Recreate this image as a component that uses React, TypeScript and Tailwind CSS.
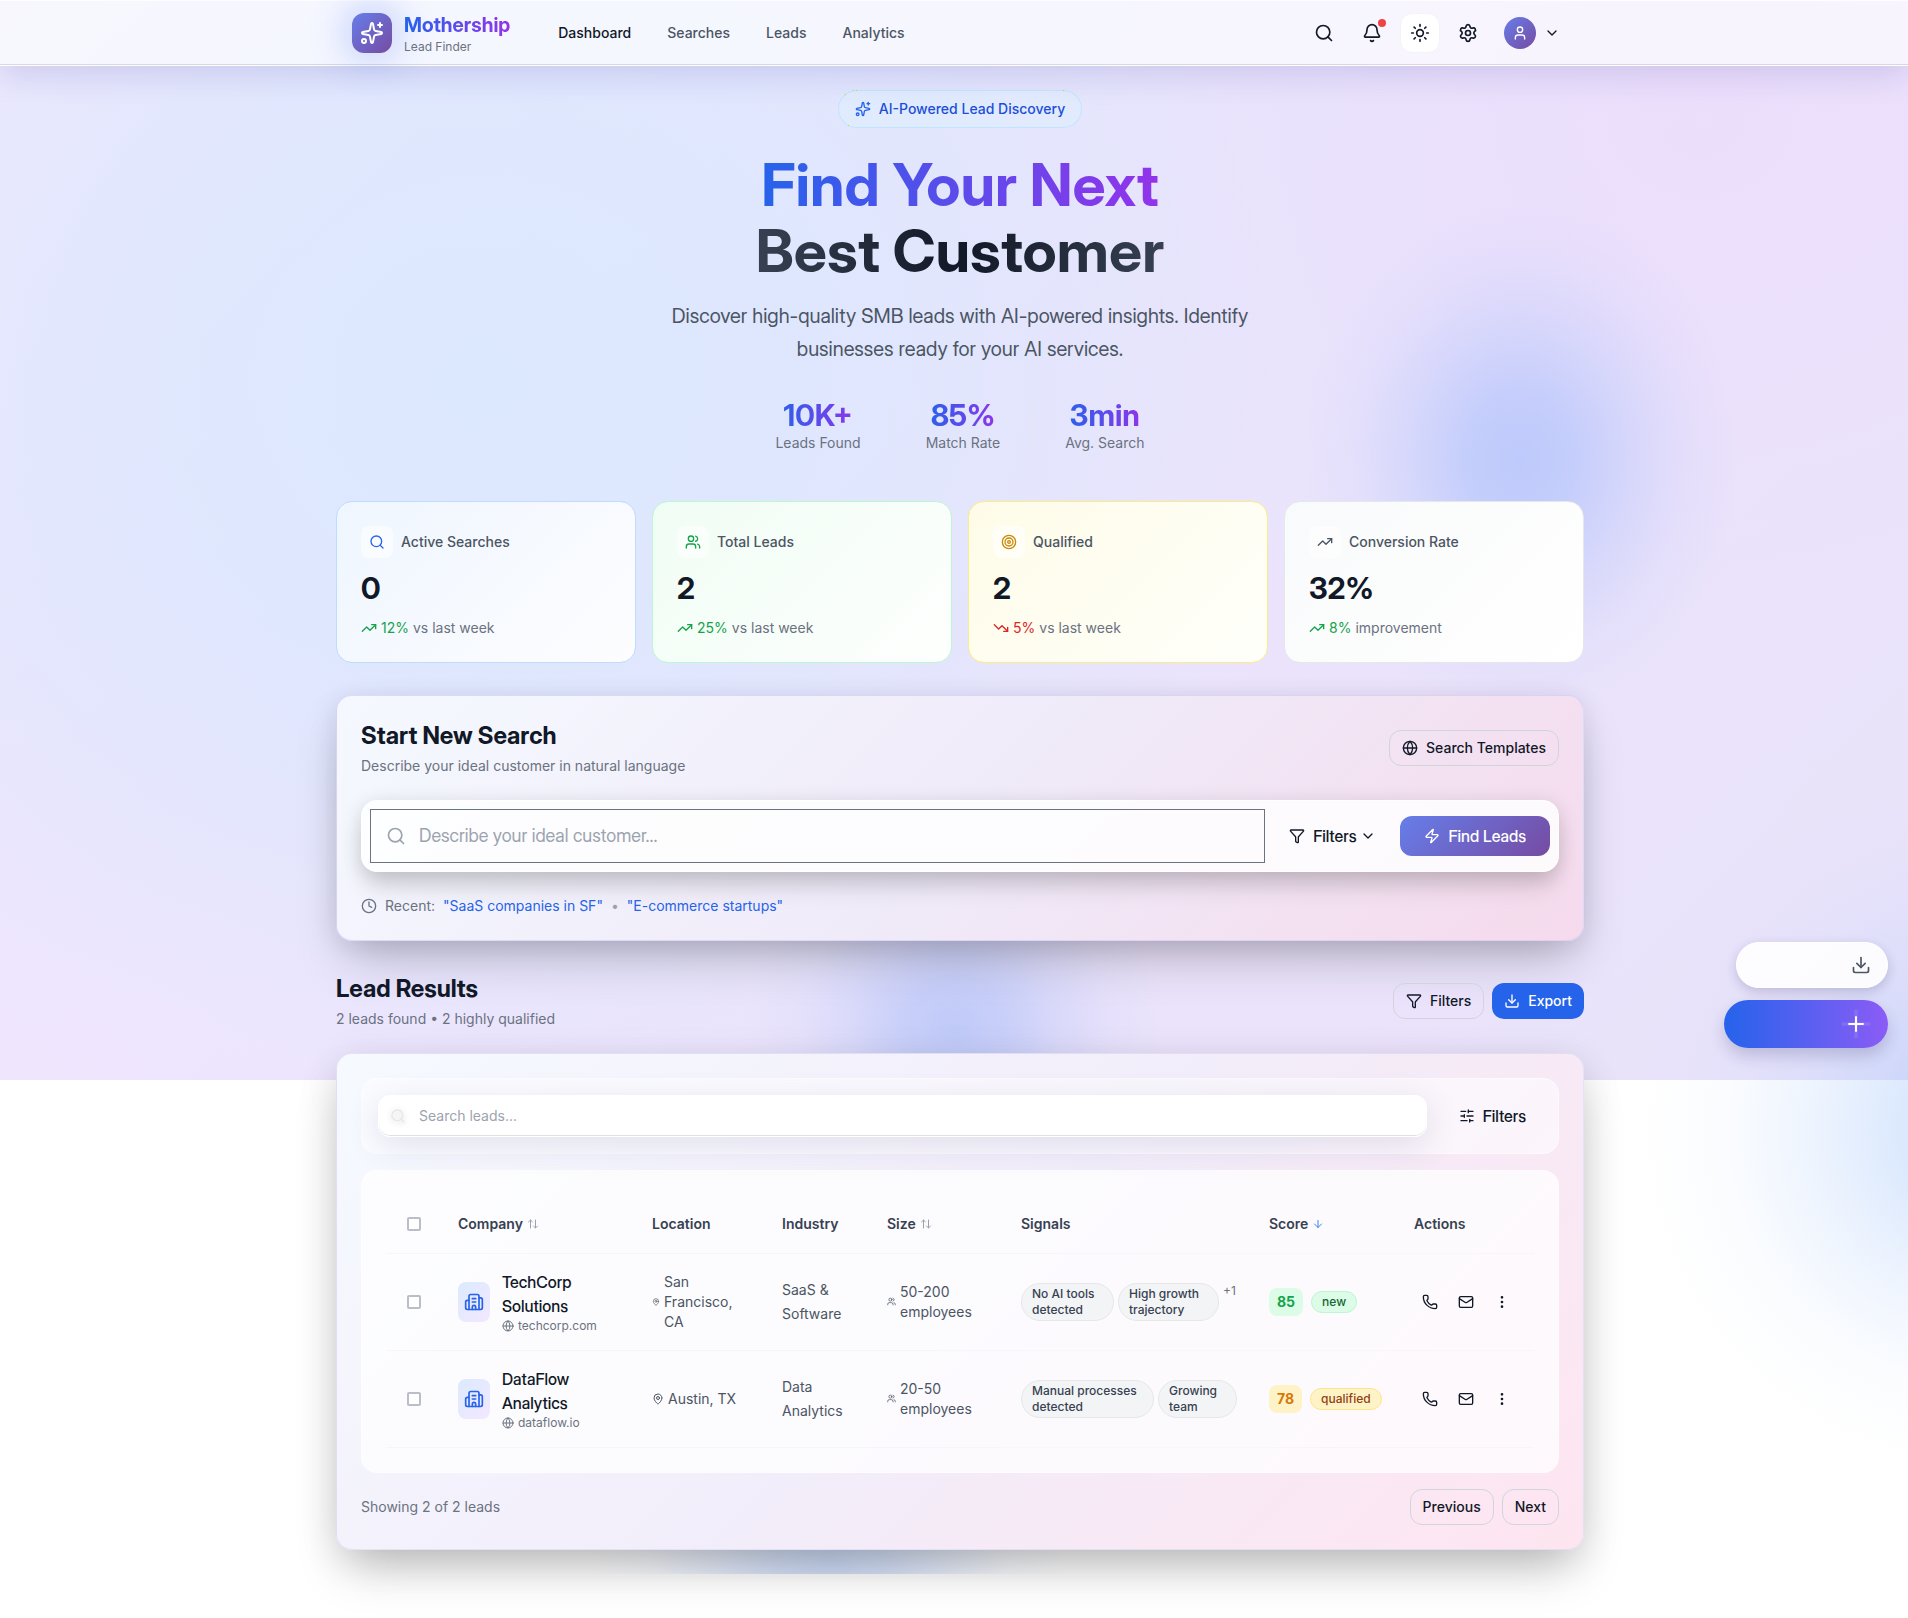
import type { ReactNode } from "react";
import {
  ArrowDown,
  ArrowUpDown,
  Bell,
  Building2,
  ChevronDown,
  Clock,
  Download,
  EllipsisVertical,
  Funnel,
  Globe,
  Mail,
  MapPin,
  Phone,
  Plus,
  Search,
  Settings,
  SlidersHorizontal,
  Sparkles,
  Sun,
  Target,
  TrendingDown,
  TrendingUp,
  User,
  Users,
  Zap,
} from "lucide-react";

const brandText = "bg-linear-to-r/srgb from-[#2563eb] to-[#9333ea] bg-clip-text text-transparent";

function IconButton({ label, active, children }: { label: string; active?: boolean; children: ReactNode }) {
  return (
    <button
      type="button"
      aria-label={label}
      className={
        active
          ? "relative flex size-10 items-center justify-center rounded-xl border border-[#f3f4f6] bg-white"
          : "relative flex size-10 items-center justify-center rounded-xl"
      }
    >
      {children}
    </button>
  );
}

function OutlineButton({ children }: { children: ReactNode }) {
  return (
    <button
      type="button"
      className="flex h-9 items-center gap-2 rounded-xl border border-[#d1d5db] px-3 text-sm font-medium text-[#111827]"
    >
      {children}
    </button>
  );
}

function Header() {
  return (
    <header className="relative z-10 border-y border-white/80 bg-white/65 pl-3 shadow-[inset_0_-1px_0_rgba(0,0,0,0.12),0_8px_32px_rgba(88,80,170,0.2)]">
      <div className="mx-auto flex h-16 max-w-7xl items-center justify-between px-8">
        <div className="flex items-center gap-8">
          <div className="flex items-center gap-3">
            <div className="flex size-10 items-center justify-center rounded-xl bg-linear-135/srgb from-[#667eea] to-[#764ba2] text-white shadow-[0_0_40px_rgba(59,102,246,0.45)]">
              <Sparkles size={24} />
            </div>
            <div>
              <div className={`font-['Inter_Display','Inter',sans-serif] text-xl font-bold ${brandText}`}>Mothership</div>
              <div className="text-xs text-[#6b7280]">Lead Finder</div>
            </div>
          </div>
          <nav className="flex items-center gap-1 text-sm font-medium text-[#4b5563]">
            <a href="#dashboard" className="px-4 py-2 text-[#111827]">
              Dashboard
            </a>
            <a href="#searches" className="px-4 py-2">
              Searches
            </a>
            <a href="#leads" className="px-4 py-2">
              Leads
            </a>
            <a href="#analytics" className="px-4 py-2">
              Analytics
            </a>
          </nav>
        </div>
        <div className="flex items-center gap-2 text-[#111827]">
          <IconButton label="Search">
            <Search size={20} />
          </IconButton>
          <IconButton label="Notifications">
            <Bell size={20} />
            <span className="absolute top-1.5 right-1.5 size-2 rounded-full bg-[#ef4444]" />
          </IconButton>
          <IconButton label="Theme" active>
            <Sun size={20} />
          </IconButton>
          <IconButton label="Settings">
            <Settings size={20} />
          </IconButton>
          <button type="button" aria-label="Account" className="flex items-center gap-2 p-2">
            <span className="flex size-8 items-center justify-center rounded-full bg-linear-135/srgb from-[#667eea] to-[#764ba2] text-white">
              <User size={16} />
            </span>
            <ChevronDown size={16} />
          </button>
        </div>
      </div>
    </header>
  );
}

function Hero() {
  const stats = [
    { value: "10K+", label: "Leads Found" },
    { value: "85%", label: "Match Rate" },
    { value: "3min", label: "Avg. Search" },
  ];
  return (
    <section className="flex flex-col items-center text-center">
      <div className="flex items-center gap-2 rounded-full border border-sky-300/30 bg-sky-100/40 px-4 py-2 text-sm font-medium text-[#1d4ed8]">
        <Sparkles size={16} className="text-[#2563eb]" />
        AI-Powered Lead Discovery
      </div>
      <h1 className="mt-6 font-['Inter_Display','Inter',sans-serif] text-[59px] leading-[66px] font-bold">
        <span className={`block ${brandText}`}>Find Your Next</span>
        <span className="block bg-linear-to-r/srgb from-[#374151] via-[#111827] to-[#374151] bg-clip-text text-transparent">
          Best Customer
        </span>
      </h1>
      <p className="mt-4 max-w-2xl px-8 font-['Inter_Display','Inter',sans-serif] text-xl leading-relaxed text-[#4b5563]">
        Discover high-quality SMB leads with AI-powered insights. Identify businesses ready for your AI services.
      </p>
      <div className="mt-8 flex items-center gap-8">
        {stats.map((s, i) => (
          <div key={s.label} className="flex items-center gap-8">
            {i > 0 && <div className="h-12 w-px bg-gray-200/70" />}
            <div>
              <div className={`font-['Inter_Display','Inter',sans-serif] text-3xl font-bold ${brandText}`}>{s.value}</div>
              <div className="text-sm text-[#6b7280]">{s.label}</div>
            </div>
          </div>
        ))}
      </div>
    </section>
  );
}

type Stat = {
  label: string;
  value: string;
  change: string;
  note: string;
  up: boolean;
  icon: ReactNode;
  tone: string;
};

const statCards: Stat[] = [
  {
    label: "Active Searches",
    value: "0",
    change: "12%",
    note: "vs last week",
    up: true,
    icon: <Search size={16} className="text-[#2563eb]" />,
    tone: "border-[#bfdbfe] from-[#eff6ff] to-[#fdfdff]",
  },
  {
    label: "Total Leads",
    value: "2",
    change: "25%",
    note: "vs last week",
    up: true,
    icon: <Users size={16} className="text-[#16a34a]" />,
    tone: "border-[#bbf7d0] from-[#f0fdf4] to-[#fefffe]",
  },
  {
    label: "Qualified",
    value: "2",
    change: "5%",
    note: "vs last week",
    up: false,
    icon: <Target size={16} className="text-[#ca8a04]" />,
    tone: "border-[#fdec85] from-[#fefce8] to-[#fffffb]",
  },
  {
    label: "Conversion Rate",
    value: "32%",
    change: "8%",
    note: "improvement",
    up: true,
    icon: <TrendingUp size={16} className="text-[#4b5563]" />,
    tone: "border-[#e5e7eb] from-[#f9fafb] to-[#ffffff]",
  },
];

function StatCard({ stat }: { stat: Stat }) {
  return (
    <div className={`rounded-2xl border bg-linear-135/srgb p-6 ${stat.tone}`}>
      <div className="flex items-center gap-2">
        <span className="flex size-8 items-center justify-center rounded-lg bg-white/60">{stat.icon}</span>
        <span className="text-sm font-medium text-[#4b5563]">{stat.label}</span>
      </div>
      <div className="mt-3 font-['Inter_Display','Inter',sans-serif] text-3xl font-bold text-[#111827]">{stat.value}</div>
      <div className="mt-3 flex items-center gap-1 text-sm text-[#6b7280]">
        <span
          className={
            stat.up ? "flex items-center gap-1 text-[#16a34a]" : "flex items-center gap-1 text-[#dc2626]"
          }
        >
          {stat.up ? <TrendingUp size={16} /> : <TrendingDown size={16} />}
          {stat.change}
        </span>
        {stat.note}
      </div>
    </div>
  );
}

function SearchPanel() {
  return (
    <section className="mt-8 rounded-2xl border border-[#c9c9f5]/60 bg-linear-135/srgb from-[#f5f9ff] via-[#f0ebf9] to-[#f5daec] p-6 shadow-[0_25px_50px_-12px_rgba(0,0,0,0.25),0_4px_24px_rgba(40,30,60,0.1)]">
      <div className="flex items-center justify-between">
        <div>
          <h2 className="font-['Inter_Display','Inter',sans-serif] text-2xl font-bold text-[#111827]">
            Start New Search
          </h2>
          <p className="mt-1 text-sm text-[#6b7280]">Describe your ideal customer in natural language</p>
        </div>
        <OutlineButton>
          <Globe size={16} />
          Search Templates
        </OutlineButton>
      </div>
      <div className="mt-6 flex items-center gap-2 rounded-2xl border border-white bg-white/85 p-2 shadow-[0_20px_25px_-5px_rgba(0,0,0,0.12),0_4px_20px_rgba(0,0,0,0.14)]">
        <div className="relative flex-1">
          <Search size={20} className="absolute top-1/2 left-4 -translate-y-1/2 text-[#9ca3af]" />
          <input
            type="text"
            aria-label="Describe your ideal customer"
            placeholder="Describe your ideal customer..."
            className="block w-full border border-[#6b7280] bg-transparent py-3 pr-4 pl-12 font-['Inter_Display','Inter',sans-serif] text-lg leading-7 text-[#111827] placeholder:text-[#9ca3af]"
          />
        </div>
        <button
          type="button"
          className="flex h-10 items-center gap-2 px-4 font-['Inter_Display','Inter',sans-serif] font-medium text-[#111827]"
        >
          <Funnel size={16} />
          <span className="flex items-center gap-1">
            Filters
            <ChevronDown size={16} />
          </span>
        </button>
        <button
          type="button"
          className="flex h-10 items-center gap-2 rounded-xl bg-linear-135/srgb from-[#667eea] to-[#764ba2] px-6 font-['Inter_Display','Inter',sans-serif] font-medium text-white"
        >
          <Zap size={16} />
          Find Leads
        </button>
      </div>
      <div className="mt-6 flex items-center gap-2 text-sm text-[#6b7280]">
        <Clock size={16} />
        <span>Recent:</span>
        <a href="#saas" className="text-[#2563eb]">
          "SaaS companies in SF"
        </a>
        <span className="text-[#9ca3af]">•</span>
        <a href="#ecommerce" className="text-[#2563eb]">
          "E-commerce startups"
        </a>
      </div>
    </section>
  );
}

type Lead = {
  name: string;
  site: string;
  location: string;
  industry: string;
  size: string;
  signals: { text: string; width: string }[];
  more?: string;
  score: string;
  status: string;
  scoreTone: string;
  statusTone: string;
  pin: number;
};

const leads: Lead[] = [
  {
    name: "TechCorp Solutions",
    site: "techcorp.com",
    location: "San Francisco, CA",
    industry: "SaaS & Software",
    size: "50-200 employees",
    signals: [
      { text: "No AI tools detected", width: "w-[93px]" },
      { text: "High growth trajectory", width: "w-[101px]" },
    ],
    more: "+1",
    score: "85",
    status: "new",
    scoreTone: "bg-[#dcfce7] text-[#16a34a]",
    statusTone: "border-[#bbf7d0] bg-[#dcfce7] text-[#166534]",
    pin: 8,
  },
  {
    name: "DataFlow Analytics",
    site: "dataflow.io",
    location: "Austin, TX",
    industry: "Data Analytics",
    size: "20-50 employees",
    signals: [
      { text: "Manual processes detected", width: "w-[133px]" },
      { text: "Growing team", width: "w-[79px]" },
    ],
    score: "78",
    status: "qualified",
    scoreTone: "bg-[#fef3c7] text-[#d97706]",
    statusTone: "border-[#fde68a] bg-[#fef3c7] text-[#92400e]",
    pin: 12,
  },
];

function Checkbox({ label }: { label: string }) {
  return (
    <input
      type="checkbox"
      aria-label={label}
      className="block size-3.5 appearance-none rounded-xs border-2 border-[#9ca3af]/70 bg-white"
    />
  );
}

function LeadRow({ lead }: { lead: Lead }) {
  return (
    <tr className="border-b border-gray-100/70">
      <td className="py-4 pl-[21px]">
        <Checkbox label={`Select ${lead.name}`} />
      </td>
      <td className="py-4 pr-8 pl-4">
        <div className="flex items-center gap-3">
          <span className="flex h-10 w-8 shrink-0 items-center justify-center rounded-lg bg-linear-135/srgb from-[#dbeafe] to-[#f3e8ff] text-[#2563eb]">
            <Building2 size={20} />
          </span>
          <div>
            <div className="font-['Inter_Display','Inter',sans-serif] font-medium text-[#111827]">{lead.name}</div>
            <div className="flex items-center gap-1 text-xs text-[#6b7280]">
              <Globe size={12} />
              {lead.site}
            </div>
          </div>
        </div>
      </td>
      <td className="py-4 pr-6 pl-4">
        <div className="flex items-center gap-1 text-sm text-[#4b5563]">
          <MapPin size={lead.pin} className="shrink-0" />
          {lead.location}
        </div>
      </td>
      <td className="py-4 pr-8 pl-4">
        <div className="text-sm leading-6 text-[#4b5563]">{lead.industry}</div>
      </td>
      <td className="py-4 pr-8 pl-4">
        <div className="flex items-center gap-1 text-sm text-[#4b5563]">
          <Users size={9} className="shrink-0" />
          {lead.size}
        </div>
      </td>
      <td className="py-4 pl-4">
        <div className="flex items-start gap-1">
          {lead.signals.map((s) => (
            <span
              key={s.text}
              className={`rounded-full border border-[#e5e7eb] bg-[#f3f4f6] px-2.5 py-0.5 text-xs font-medium text-[#374151] ${s.width}`}
            >
              {s.text}
            </span>
          ))}
          {lead.more && <span className="text-xs text-[#6b7280]">{lead.more}</span>}
        </div>
      </td>
      <td className="py-4 pl-4">
        <div className="flex items-center gap-2">
          <span className={`rounded-lg px-2 py-1 text-sm font-bold ${lead.scoreTone}`}>{lead.score}</span>
          <span className={`rounded-full border px-2.5 py-0.5 text-xs font-medium ${lead.statusTone}`}>
            {lead.status}
          </span>
        </div>
      </td>
      <td className="py-4 pl-4">
        <div className="flex items-center gap-1 text-[#111827]">
          <button type="button" aria-label={`Call ${lead.name}`} className="flex size-8 items-center justify-center">
            <Phone size={16} />
          </button>
          <button type="button" aria-label={`Email ${lead.name}`} className="flex size-8 items-center justify-center">
            <Mail size={16} />
          </button>
          <button type="button" aria-label={`More for ${lead.name}`} className="flex size-8 items-center justify-center">
            <EllipsisVertical size={16} />
          </button>
        </div>
      </td>
    </tr>
  );
}

function LeadTable() {
  return (
    <table className="w-full table-fixed text-left">
      <colgroup>
        <col className="w-[56px]" />
        <col className="w-[194px]" />
        <col className="w-[130px]" />
        <col className="w-[105px]" />
        <col className="w-[134px]" />
        <col className="w-[248px]" />
        <col className="w-[145px]" />
        <col className="w-[136px]" />
      </colgroup>
      <thead>
        <tr className="h-[58px] border-b border-gray-100/70 text-sm text-[#374151]">
          <th className="pl-[21px]">
            <Checkbox label="Select all leads" />
          </th>
          <th className="pl-4 font-semibold">
            <span className="flex items-center gap-1">
              Company <ArrowUpDown size={12} className="text-[#9ca3af]" />
            </span>
          </th>
          <th className="pl-4 font-semibold">Location</th>
          <th className="pl-4 font-semibold">Industry</th>
          <th className="pl-4 font-semibold">
            <span className="flex items-center gap-1">
              Size <ArrowUpDown size={12} className="text-[#9ca3af]" />
            </span>
          </th>
          <th className="pl-4 font-semibold">Signals</th>
          <th className="pl-4 font-semibold">
            <span className="flex items-center gap-1">
              Score <ArrowDown size={12} className="text-[#3b82f6]" />
            </span>
          </th>
          <th className="pl-4 font-semibold">Actions</th>
        </tr>
      </thead>
      <tbody>
        {leads.map((l) => (
          <LeadRow key={l.name} lead={l} />
        ))}
      </tbody>
    </table>
  );
}

function Results() {
  return (
    <section className="mt-8">
      <div className="flex items-center justify-between">
        <div>
          <h2 className="font-['Inter_Display','Inter',sans-serif] text-2xl font-bold text-[#111827]">Lead Results</h2>
          <p className="mt-1 text-sm text-[#6b7280]">2 leads found • 2 highly qualified</p>
        </div>
        <div className="flex items-center gap-2">
          <OutlineButton>
            <Funnel size={16} />
            Filters
          </OutlineButton>
          <button
            type="button"
            className="flex h-9 items-center gap-2 rounded-xl bg-[#2563eb] px-3 text-sm font-medium text-white"
          >
            <Download size={16} />
            Export
          </button>
        </div>
      </div>
      <div className="mt-6 rounded-2xl border border-[#d5d6f2]/60 bg-linear-135/srgb from-[#f6faff] via-[#f2edfa] to-[#fee5f0] p-6 shadow-[0_25px_50px_-12px_rgba(0,0,0,0.25),0_8px_40px_rgba(0,0,0,0.1)]">
        <div className="flex items-center gap-4 rounded-2xl border border-white/40 bg-white/55 p-4">
          <div className="relative flex-1">
            <Search
              size={16}
              className="absolute top-1/2 left-3 -translate-y-1/2 text-gray-200 drop-shadow-[0_1px_3px_rgba(0,0,0,0.2)]"
            />
            <input
              type="text"
              aria-label="Search leads"
              placeholder="Search leads..."
              className="block w-full rounded-xl border border-white bg-white/95 py-2.5 pr-4 pl-10 text-sm text-[#111827] shadow-[inset_0_-1px_0_rgba(0,0,0,0.12),0_8px_32px_rgba(88,80,150,0.16)] placeholder:text-[#9ca3af]"
            />
          </div>
          <button
            type="button"
            className="flex h-10 items-center gap-2 px-4 font-['Inter_Display','Inter',sans-serif] font-medium text-[#111827]"
          >
            <SlidersHorizontal size={16} />
            Filters
          </button>
        </div>
        <div className="mt-4 rounded-2xl border border-white/40 bg-white/75 p-6">
          <LeadTable />
        </div>
        <div className="mt-4 flex items-center justify-between">
          <p className="text-sm text-[#6b7280]">Showing 2 of 2 leads</p>
          <div className="flex gap-2">
            <OutlineButton>Previous</OutlineButton>
            <OutlineButton>Next</OutlineButton>
          </div>
        </div>
      </div>
    </section>
  );
}

function Backdrop() {
  return (
    <div aria-hidden="true" className="absolute inset-x-0 top-0 -z-10 h-[1574px] overflow-hidden">
      <div className="absolute inset-x-0 top-0 h-[1080px] bg-[radial-gradient(ellipse_800px_720px_at_480px_380px,rgba(218,232,254,0.9)_0%,rgba(218,232,254,0.65)_40%,rgba(218,232,254,0)_100%),radial-gradient(ellipse_900px_500px_at_0px_1080px,rgba(240,230,254,0.9)_0%,rgba(240,230,254,0)_100%),radial-gradient(ellipse_600px_500px_at_1700px_120px,rgba(236,221,252,0.8)_0%,rgba(236,221,252,0)_100%),linear-gradient(135deg,#f0e8fd_0%,#e7e5fd_35%,#ebe3fb_70%,#e8e3fa_100%)]" />
      <div className="absolute inset-0 bg-[radial-gradient(ellipse_220px_260px_at_1520px_460px,rgba(140,176,252,0.48)_0%,rgba(140,176,252,0.4)_25%,rgba(140,176,252,0.22)_50%,rgba(140,176,252,0.07)_75%,rgba(140,176,252,0)_100%),radial-gradient(circle_210px_at_955px_1030px,rgba(140,172,245,0.45)_0%,rgba(140,172,245,0.36)_25%,rgba(140,172,245,0.18)_50%,rgba(140,172,245,0.05)_75%,rgba(140,172,245,0)_100%),radial-gradient(circle_340px_at_1980px_1130px,rgba(160,195,250,0.5)_0%,rgba(160,195,250,0.36)_25%,rgba(160,195,250,0.18)_50%,rgba(160,195,250,0.05)_75%,rgba(160,195,250,0)_100%),radial-gradient(circle_240px_at_830px_1560px,rgba(140,175,245,0.4)_0%,rgba(140,175,245,0.32)_25%,rgba(140,175,245,0.18)_50%,rgba(140,175,245,0.05)_75%,rgba(140,175,245,0)_100%)]" />
    </div>
  );
}

function FloatingActions() {
  return (
    <div className="fixed top-[942px] right-5 flex flex-col items-end gap-3">
      <button
        type="button"
        aria-label="Download"
        className="flex h-[46px] w-[152px] items-center justify-end rounded-full border border-white bg-white/90 pr-4 text-[#4b5563] shadow-[0_4px_12px_rgba(40,30,90,0.2)]"
      >
        <Download size={20} />
      </button>
      <button
        type="button"
        aria-label="Add"
        className="relative flex h-12 w-[164px] items-center justify-end rounded-full bg-linear-to-r/srgb from-[#2563eb] to-[#8b5cf6] pr-5 text-white shadow-[0_8px_16px_rgba(40,30,90,0.2)]"
      >
        <Plus size={44} className="absolute right-2.5 opacity-10" />
        <Plus size={24} />
      </button>
    </div>
  );
}

export default function App() {
  return (
    <div className="relative isolate min-h-screen bg-white font-['Inter',sans-serif] text-base">
      <Backdrop />
      <Header />
      <main className="pl-3">
        <div className="mx-auto max-w-7xl px-4 pt-6 pb-16">
          <Hero />
          <section className="mt-12 grid grid-cols-4 gap-4">
            {statCards.map((s) => (
              <StatCard key={s.label} stat={s} />
            ))}
          </section>
          <SearchPanel />
          <Results />
        </div>
      </main>
      <FloatingActions />
    </div>
  );
}
